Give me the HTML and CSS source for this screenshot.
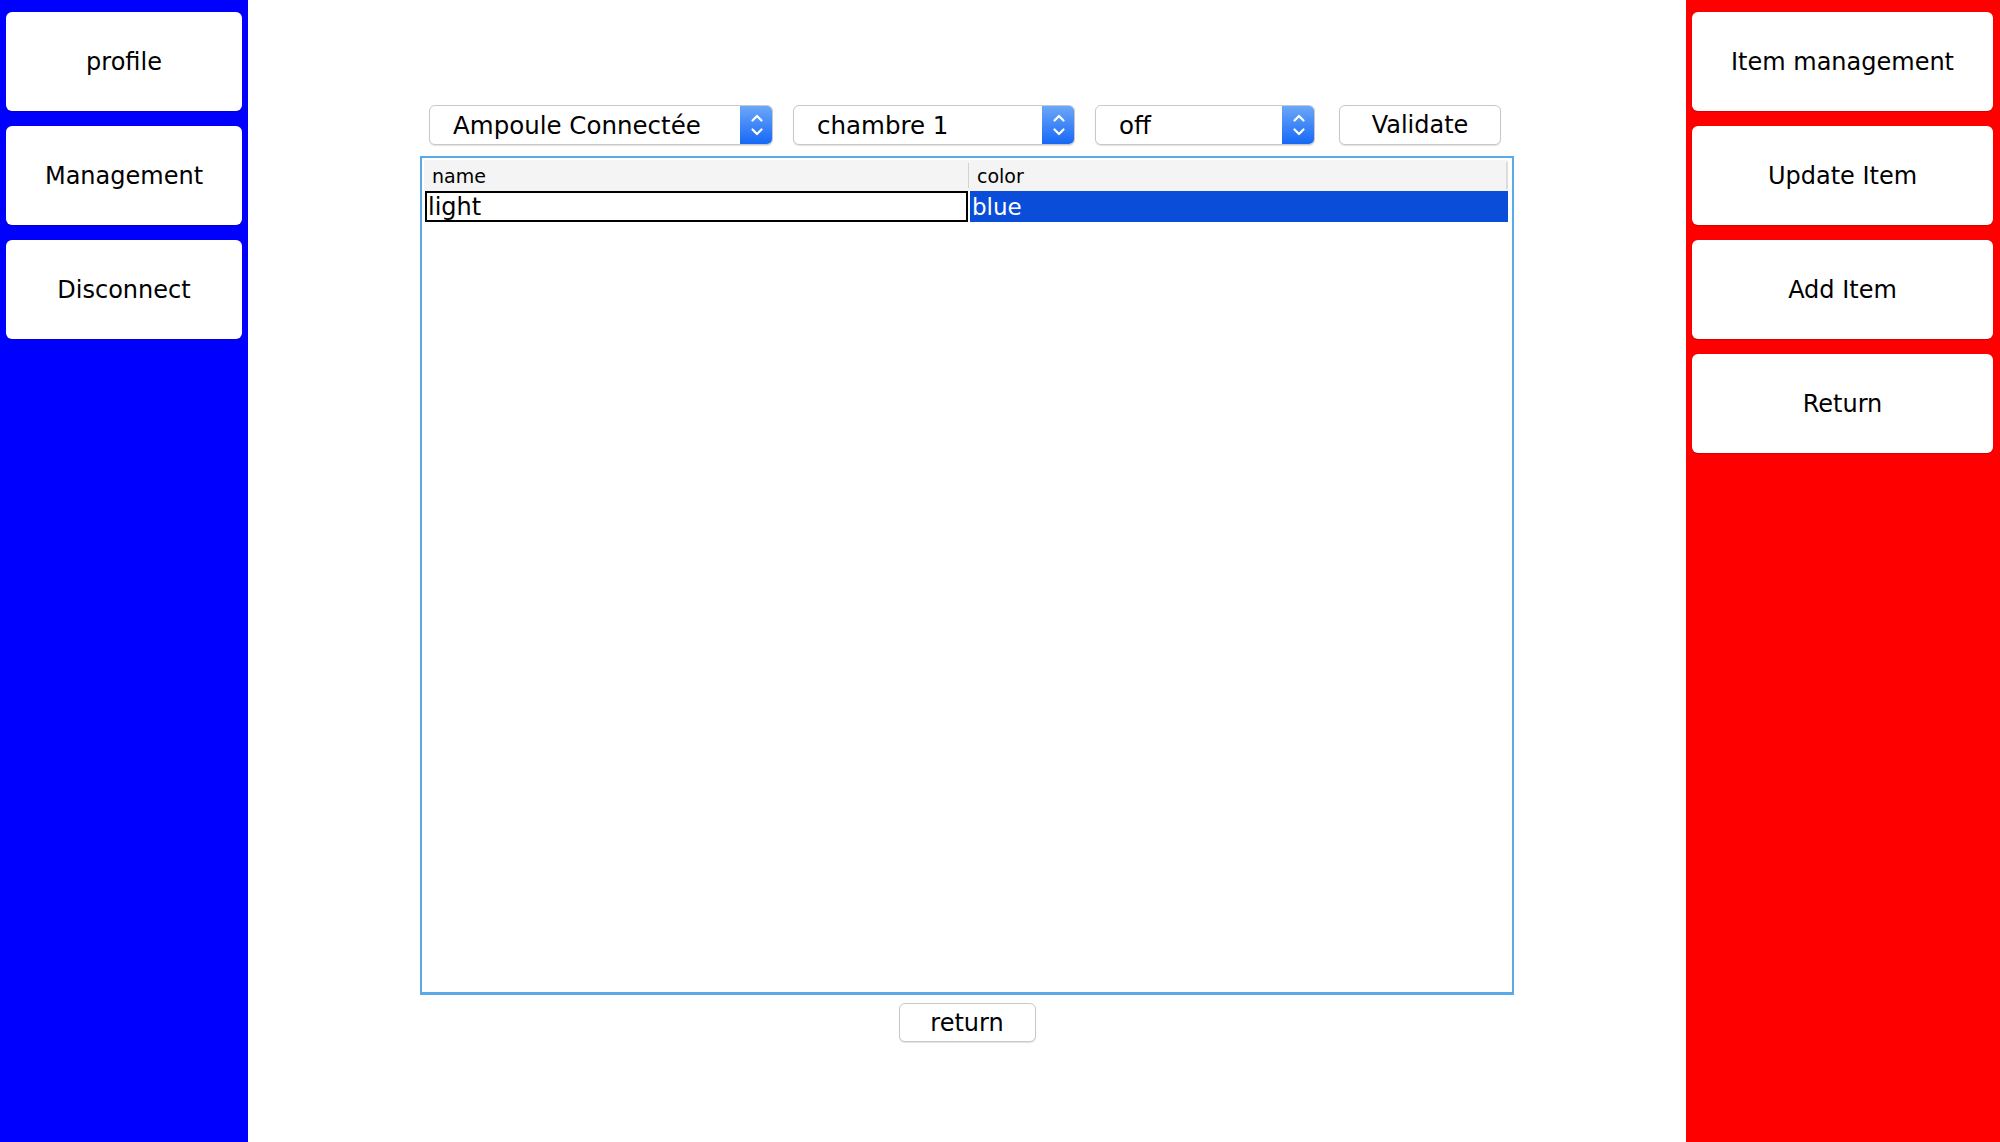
FILE: index.html
```html
<!DOCTYPE html>
<html>
<head>
<meta charset="utf-8">
<link rel="stylesheet" href="styles.css">
</head>
<body>
<div class="app">
  <aside class="side side-left">
    <div class="side-btn">profile</div>
    <div class="side-btn">Management</div>
    <div class="side-btn">Disconnect</div>
  </aside>
  <main class="main">
    <div class="toolbar">
      <div class="combo combo-1"><span class="combo-text">Ampoule Connectée</span><span class="combo-arrow"><svg width="14" height="24" viewBox="0 0 14 24"><path d="M2.5 7.5 L7 3 L11.5 7.5" fill="none" stroke="#fff" stroke-width="2.2" stroke-linecap="round" stroke-linejoin="round"/><path d="M2.5 16.5 L7 21 L11.5 16.5" fill="none" stroke="#fff" stroke-width="2.2" stroke-linecap="round" stroke-linejoin="round"/></svg></span></div>
      <div class="combo combo-2"><span class="combo-text">chambre 1</span><span class="combo-arrow"><svg width="14" height="24" viewBox="0 0 14 24"><path d="M2.5 7.5 L7 3 L11.5 7.5" fill="none" stroke="#fff" stroke-width="2.2" stroke-linecap="round" stroke-linejoin="round"/><path d="M2.5 16.5 L7 21 L11.5 16.5" fill="none" stroke="#fff" stroke-width="2.2" stroke-linecap="round" stroke-linejoin="round"/></svg></span></div>
      <div class="combo combo-3"><span class="combo-text">off</span><span class="combo-arrow"><svg width="14" height="24" viewBox="0 0 14 24"><path d="M2.5 7.5 L7 3 L11.5 7.5" fill="none" stroke="#fff" stroke-width="2.2" stroke-linecap="round" stroke-linejoin="round"/><path d="M2.5 16.5 L7 21 L11.5 16.5" fill="none" stroke="#fff" stroke-width="2.2" stroke-linecap="round" stroke-linejoin="round"/></svg></span></div>
      <div class="push-btn validate">Validate</div>
    </div>
    <div class="table">
      <div class="thead">
        <div class="th th-name">name</div>
        <div class="th th-color">color</div>
        <div class="th-corner"></div>
      </div>
      <div class="trow">
        <div class="td td-name">light</div>
        <div class="td td-color">blue</div>
      </div>
    </div>
    <div class="footer">
      <div class="push-btn return-btn">return</div>
    </div>
  </main>
  <aside class="side side-right">
    <div class="side-btn">Item management</div>
    <div class="side-btn">Update Item</div>
    <div class="side-btn">Add Item</div>
    <div class="side-btn">Return</div>
  </aside>
</div>
</body>
</html>
```

FILE: styles.css
```css
* { box-sizing: border-box; }
html, body { margin: 0; padding: 0; }
body {
  width: 2000px;
  height: 1142px;
  overflow: hidden;
  background: #ffffff;
  font-family: "DejaVu Sans", "Liberation Sans", sans-serif;
  color: #000;
}
.app {
  display: flex;
  height: 1142px;
}
.side {
  display: flex;
  flex-direction: column;
  gap: 15px;
  padding-top: 12px;
}
.side-left {
  width: 248px;
  background: #0000ff;
  padding-left: 6px;
  padding-right: 6px;
}
.side-right {
  width: 314px;
  background: #ff0000;
  padding-left: 6px;
  padding-right: 7px;
}
.side-btn {
  height: 99px;
  background: #ffffff;
  border-radius: 6px;
  display: flex;
  align-items: center;
  justify-content: center;
  font-size: 24px;
  box-shadow: 0 1px 1px rgba(0,0,0,0.18);
}
.main {
  flex: 1;
  display: flex;
  flex-direction: column;
  align-items: center;
  padding-top: 105px;
}
.toolbar {
  display: flex;
  align-items: center;
  height: 40px;
  gap: 20px;
  margin-left: -4px;
}
.combo {
  height: 40px;
  display: flex;
  align-items: stretch;
  border: 1px solid #c9c9c9;
  border-radius: 6px;
  background: #fff;
  box-shadow: 0 1px 1px rgba(0,0,0,0.12);
  overflow: hidden;
  font-size: 24.5px;
}
.combo-1 { width: 344px; }
.combo-2 { width: 282px; }
.combo-3 { width: 220px; }
.combo-text {
  flex: 1;
  display: flex;
  align-items: center;
  padding-left: 23px;
  white-space: nowrap;
}
.combo-arrow {
  width: 33px;
  display: flex;
  align-items: center;
  justify-content: center;
  background: linear-gradient(#6ea9f8, #1466f6);
  margin: -1px -1px -1px 0;
}
.push-btn {
  height: 40px;
  display: flex;
  align-items: center;
  justify-content: center;
  border: 1px solid #c9c9c9;
  border-radius: 6px;
  background: #fff;
  box-shadow: 0 1px 1px rgba(0,0,0,0.12);
  font-size: 24px;
}
.validate {
  width: 162px;
  margin-left: 4px;
}
.table {
  margin-top: 11px;
  width: 1094px;
  height: 839px;
  border: 2px solid #5aaaea;
  border-bottom-width: 3px;
  padding: 2px 4px 0 2px;
  display: flex;
  flex-direction: column;
}
.thead {
  display: flex;
  height: 31px;
  background: #f4f4f4;
}
.th {
  display: flex;
  align-items: center;
  font-size: 19px;
  padding-left: 8px;
}
.th-name { width: 544px; }
.th-color {
  flex: 1;
  border-left: 1px solid #d2d2d2;
  margin: 3px 0;
}
.th-corner {
  width: 2px;
  margin: 2px 0 2px;
  background: #dcdcdc;
}
.trow {
  display: flex;
  height: 31px;
}
.td {
  display: flex;
  align-items: center;
  font-size: 23px;
}
.td-name {
  width: 543px;
  margin-left: 1px;
  border: 2px solid #000;
  padding-left: 1px;
  font-size: 24px;
}
.td-color {
  flex: 1;
  margin-left: 2px;
  background: #0a4dd8;
  color: #fff;
  padding-left: 2px;
}
.footer {
  display: flex;
  justify-content: center;
  margin-top: 8px;
}
.return-btn {
  width: 137px;
  height: 39px;
}
```
